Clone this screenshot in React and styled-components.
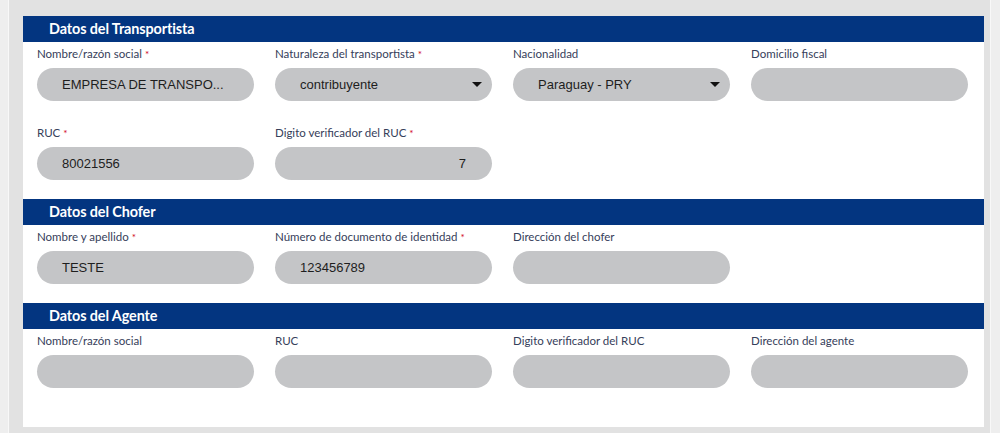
import React from 'react'
import styled, { createGlobalStyle } from 'styled-components'

const GlobalStyle = createGlobalStyle`
  html, body {
    margin: 0;
    padding: 0;
    background: #e3e3e3;
  }
`

const Page = styled.div`
  display: flex;
  min-height: 433px;
  width: 1000px;
`

const EdgeStrip = styled.div`
  width: ${p => p.$width}px;
  background: #eeeeee;
  border-${p => p.$side}: 1px solid #f8f8f8;
  flex-shrink: 0;
`

const Main = styled.div`
  flex: 1;
  background: #e2e2e2;
  padding: 16px 6px 7px 14px;
`

const Panel = styled.div`
  background: #ffffff;
  padding-bottom: 20px;
`

const SectionBar = styled.div`
  height: 26px;
  background: #033580;
  color: #ffffff;
  font-family: Lato, "Noto Sans", sans-serif;
  font-weight: 700;
  font-size: 14.4px;
  line-height: 26px;
  padding-left: 26px;
  letter-spacing: -0.1px;
`

const FieldGrid = styled.div`
  display: grid;
  grid-template-columns: repeat(4, 217px);
  column-gap: 21px;
  row-gap: 24px;
  padding: 4px 15px 19px 14px;
`

const Field = styled.div`
  display: flex;
  flex-direction: column;
  gap: 6px;
`

const Label = styled.label`
  font-family: Lato, "Noto Sans", sans-serif;
  font-size: 11.5px;
  line-height: 16px;
  color: #36405a;
  white-space: nowrap;
`

const Required = styled.span`
  color: #d0021b;
  font-size: 10px;
  margin-left: 3px;
  vertical-align: top;
`

const InputBox = styled.div`
  height: 33px;
  border-radius: 17px;
  background: #c4c5c7;
  display: flex;
  align-items: center;
  justify-content: ${p => (p.$right ? 'flex-end' : 'space-between')};
  padding: 0 ${p => (p.$select ? '10px' : p.$right ? '26px' : '18px')} 0 25px;
  font-family: "Liberation Sans", Arial, sans-serif;
  font-size: 13px;
  color: #1e1e1e;
  overflow: hidden;
  white-space: nowrap;
`

const Arrow = styled.span`
  width: 0;
  height: 0;
  border-left: 5px solid transparent;
  border-right: 5px solid transparent;
  border-top: 5px solid #111111;
`

const sections = [
  {
    title: 'Datos del Transportista',
    fields: [
      { label: 'Nombre/razón social', required: true, value: 'EMPRESA DE TRANSPO...' },
      { label: 'Naturaleza del transportista', required: true, value: 'contribuyente', select: true },
      { label: 'Nacionalidad', value: 'Paraguay - PRY', select: true },
      { label: 'Domicilio fiscal' },
      { label: 'RUC', required: true, value: '80021556' },
      { label: 'Digito verificador del RUC', required: true, value: '7', right: true },
    ],
  },
  {
    title: 'Datos del Chofer',
    fields: [
      { label: 'Nombre y apellido', required: true, value: 'TESTE' },
      { label: 'Número de documento de identidad', required: true, value: '123456789' },
      { label: 'Dirección del chofer' },
    ],
  },
  {
    title: 'Datos del Agente',
    fields: [
      { label: 'Nombre/razón social' },
      { label: 'RUC' },
      { label: 'Digito verificador del RUC' },
      { label: 'Dirección del agente' },
    ],
  },
]

const FormField = ({ field }) => (
  <Field>
    <Label>
      {field.label}
      {field.required && <Required>*</Required>}
    </Label>
    <InputBox $select={field.select} $right={field.right}>
      <span>{field.value}</span>
      {field.select && <Arrow />}
    </InputBox>
  </Field>
)

const App = () => {
  return (
    <>
      <GlobalStyle />
      <Page>
        <EdgeStrip $width={8} $side="right" />
        <Main>
          <Panel>
            {sections.map(section => (
              <section key={section.title}>
                <SectionBar>{section.title}</SectionBar>
                <FieldGrid>
                  {section.fields.map((f, i) => (
                    <FormField key={i} field={f} />
                  ))}
                </FieldGrid>
              </section>
            ))}
          </Panel>
        </Main>
        <EdgeStrip $width={9} $side="left" />
      </Page>
    </>
  )
}

export default App
